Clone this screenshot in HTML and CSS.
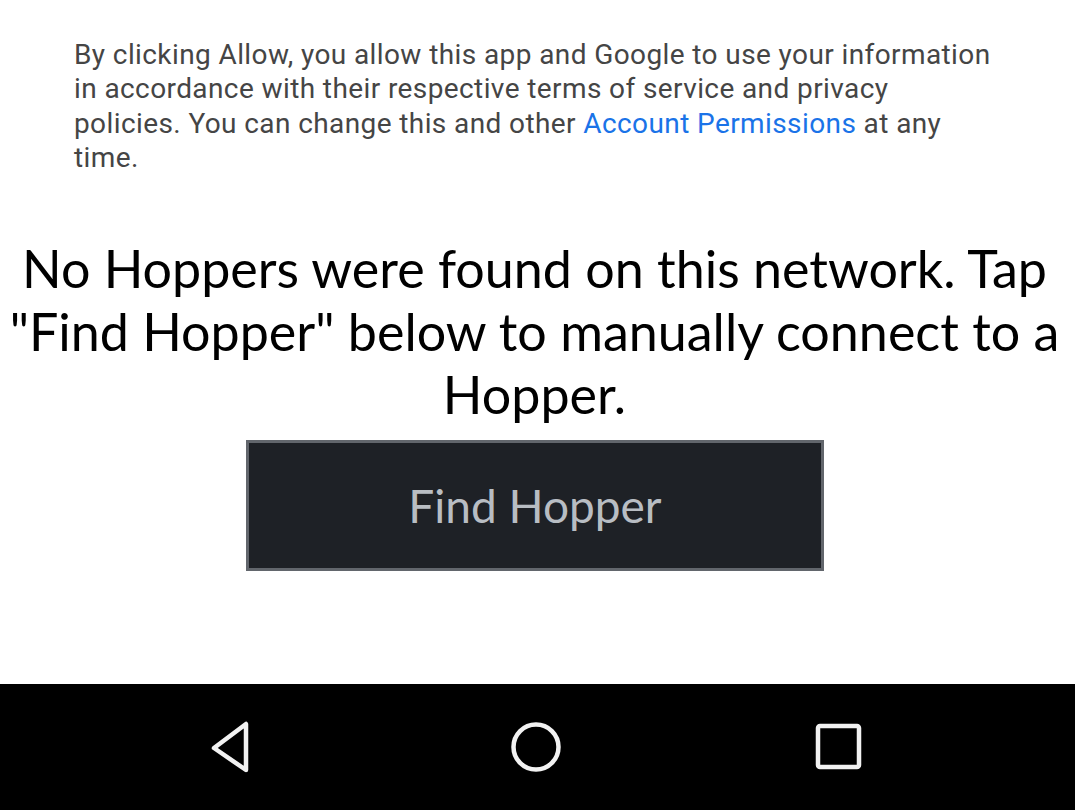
FILE: index.html
```html
<!DOCTYPE html>
<html>
<head>
<meta charset="utf-8">
<link rel="stylesheet" href="styles.css">
</head>
<body>
<div class="screen">
  <main class="content">
    <p class="consent">By clicking Allow, you allow this app and Google to use your information in accordance with their respective terms of service and privacy policies. You can change this and other <a class="link" href="#">Account Permissions</a> at any time.</p>
    <h1 class="message">No Hoppers were found on this network. Tap "Find Hopper" below to manually connect to a Hopper.</h1>
    <button class="find-btn">Find Hopper</button>
  </main>
  <nav class="navbar">
    <svg class="nav-icon" width="60" height="60" viewBox="0 0 60 60"><path d="M43 7 L43 53 L11 31 Z" fill="none" stroke="#f2f2f2" stroke-width="4.5" stroke-linejoin="round"/></svg>
    <svg class="nav-icon" width="60" height="60" viewBox="0 0 60 60"><circle cx="30" cy="30" r="22.5" fill="none" stroke="#f2f2f2" stroke-width="4.5"/></svg>
    <svg class="nav-icon" width="60" height="60" viewBox="0 0 60 60"><rect x="9" y="9" width="41" height="41" rx="2" fill="none" stroke="#f2f2f2" stroke-width="4.5"/></svg>
  </nav>
</div>
</body>
</html>
```
FILE: styles.css
```css
html, body {
  margin: 0;
  padding: 0;
  background: #ffffff;
}
.screen {
  width: 1075px;
  height: 810px;
  display: flex;
  flex-direction: column;
  overflow: hidden;
}
.content {
  flex: 1;
  display: flex;
  flex-direction: column;
  align-items: center;
}
.consent {
  margin: 38px 0 0 74px;
  align-self: flex-start;
  width: 925px;
  font-family: Roboto, "Liberation Sans", sans-serif;
  font-size: 28px;
  letter-spacing: 0.4px;
  line-height: 34.3px;
  color: #454545;
}
.link {
  color: #1a73e8;
  text-decoration: none;
}
.message {
  margin: 62px 0 0 0;
  font-family: Lato, "Liberation Sans", sans-serif;
  font-weight: 400;
  font-size: 52px;
  line-height: 63px;
  color: #000000;
  text-align: center;
  width: 1069px;
  align-self: flex-start;
}
.find-btn {
  margin: 14px 5px 0 0;
  width: 578px;
  height: 131px;
  background: #1e2126;
  border: 3px solid #62666c;
  color: #b8bdc3;
  font-family: Lato, "Liberation Sans", sans-serif;
  font-size: 46px;
  padding: 0;
}
.navbar {
  height: 126px;
  background: #000000;
  display: flex;
  align-items: center;
  justify-content: center;
  gap: 243px;
  padding-right: 4px;
}
.nav-icon {
  display: block;
}
```
